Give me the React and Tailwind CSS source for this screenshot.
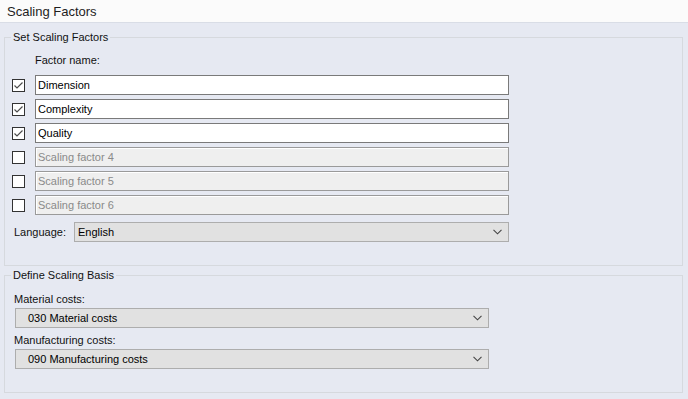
import React from 'react';

const factors = [
  { name: 'Dimension', checked: true },
  { name: 'Complexity', checked: true },
  { name: 'Quality', checked: true },
  { name: 'Scaling factor 4', checked: false },
  { name: 'Scaling factor 5', checked: false },
  { name: 'Scaling factor 6', checked: false },
];

function Check({ checked }) {
  return (
    <div className="w-[13px] h-[13px] border border-[#333333] bg-white flex items-center justify-center shrink-0">
      {checked && (
        <svg width="11" height="11" viewBox="0 0 11 11">
          <path d="M1.5 5.5 L4 8 L9.5 2.5" fill="none" stroke="#4d4d4d" strokeWidth="1.2" />
        </svg>
      )}
    </div>
  );
}

function Chevron() {
  return (
    <svg width="9" height="6" viewBox="0 0 9 6" className="shrink-0">
      <path d="M0.5 0.8 L4.5 4.8 L8.5 0.8" fill="none" stroke="#444" strokeWidth="1.1" />
    </svg>
  );
}

function Select({ value, className, padLeft }) {
  return (
    <div className={`h-[20px] flex items-center justify-between border border-[#adadad] bg-[#e1e1e1] pr-[6px] text-black ${padLeft} ${className}`}>
      <span>{value}</span>
      <Chevron />
    </div>
  );
}

export default function App() {
  return (
    <div className="w-[688px] h-[399px] bg-[#e6e9f2] font-['Liberation_Sans',Arial,sans-serif] text-[11px] leading-[13px] text-[#111]">
      {/* Title */}
      <div className="h-[23px] bg-[#fbfbfb] border-b border-[#d9dde6] flex items-center pl-[7px] text-[13px] text-[#1e1e1e]">
        Scaling Factors
      </div>

      <div className="pt-[8px] pl-[4px] w-[683px]">
        {/* Set Scaling Factors */}
        <fieldset className="border border-[#d6d9de] pb-[23px]">
          <legend className="ml-[6px] px-[2px] text-[#111]">Set Scaling Factors</legend>
          <div className="pl-[30px] mt-[10px]">Factor name:</div>
          <div className="mt-[8px] flex flex-col gap-[4px] pl-[7px]">
            {factors.map(f => (
              <div key={f.name} className="flex items-center gap-[10px] h-[20px]">
                <Check checked={f.checked} />
                <div
                  className={`w-[474px] h-[20px] flex items-center pl-[2px] border ${
                    f.checked
                      ? 'border-[#7a7a7a] bg-white text-black'
                      : 'border-[#9a9a9a] bg-[#efefef] text-[#8a8a8a] shadow-[inset_1px_1px_0_#ffffff]'
                  }`}
                >
                  {f.name}
                </div>
              </div>
            ))}
          </div>
          <div className="mt-[7px] flex items-center pl-[9px]">
            <span className="w-[60px]">Language:</span>
            <Select value="English" className="w-[435px]" padLeft="pl-[3px]" />
          </div>
        </fieldset>

        {/* Define Scaling Basis */}
        <fieldset className="border border-[#d6d9de] pb-[23px] mt-[3px]">
          <legend className="ml-[6px] px-[2px] text-[#111]">Define Scaling Basis</legend>
          <div className="pl-[9px] mt-[11px]">Material costs:</div>
          <Select value="030 Material costs" className="ml-[10px] mt-[2px] w-[474px]" padLeft="pl-[12px]" />
          <div className="pl-[9px] mt-[6px]">Manufacturing costs:</div>
          <Select value="090 Manufacturing costs" className="ml-[10px] mt-[2px] w-[474px]" padLeft="pl-[12px]" />
        </fieldset>
      </div>
    </div>
  );
}
